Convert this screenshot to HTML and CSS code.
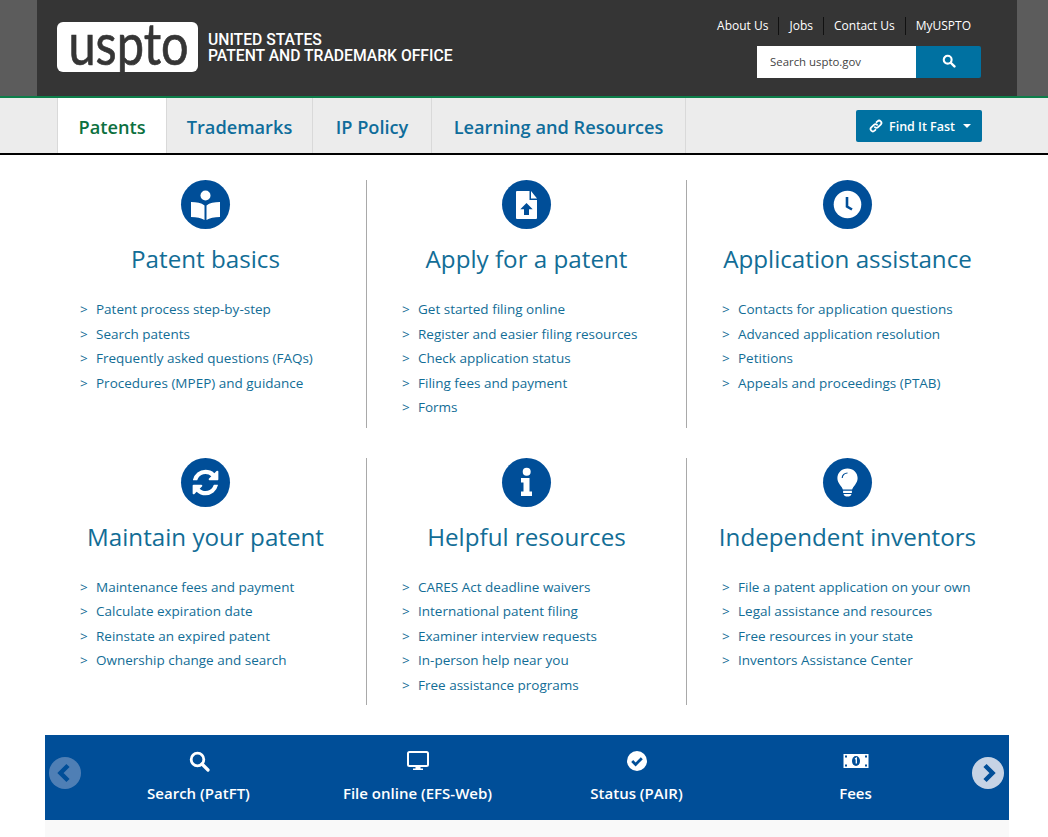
FILE: index.html
```html
<!DOCTYPE html>
<html lang="en">
<head>
<meta charset="utf-8">
<title>Patents | USPTO</title>
<link rel="stylesheet" href="styles.css">
</head>
<body>
<header class="masthead">
  <div class="masthead-inner">
    <a class="brand" href="#">
      <span class="logo"><span class="logo-text">uspto</span></span>
      <span class="agency">UNITED STATES<br>PATENT AND TRADEMARK OFFICE</span>
    </a>
    <div class="utility">
      <nav class="top-links">
        <a href="#">About Us</a><a href="#">Jobs</a><a href="#">Contact Us</a><a href="#">MyUSPTO</a>
      </nav>
      <form class="search">
        <span class="search-field">Search uspto.gov</span>
        <span class="search-btn">
          <svg class="i16" viewBox="0 0 16 16"><circle cx="6.5" cy="6.5" r="4.5" fill="none" stroke="#fff" stroke-width="2.4"/><path d="M10 10l4.2 4.2" stroke="#fff" stroke-width="2.8" stroke-linecap="round"/></svg>
        </span>
      </form>
    </div>
  </div>
</header>
<div class="navbar">
  <nav class="tabs">
    <a class="tab active" href="#">Patents</a>
    <a class="tab" href="#">Trademarks</a>
    <a class="tab" href="#">IP Policy</a>
    <a class="tab" href="#">Learning and Resources</a>
  </nav>
  <a class="fast" href="#">
    <svg class="i14" viewBox="0 0 16 16"><g fill="none" stroke="#fff" stroke-width="2" stroke-linecap="round"><path d="M6.7 9.3a2.6 2.6 0 0 0 3.7 0l3-3a2.6 2.6 0 0 0-3.7-3.7L8.6 3.7"/><path d="M9.3 6.7a2.6 2.6 0 0 0-3.7 0l-3 3a2.6 2.6 0 0 0 3.7 3.7l1.1-1.1"/></g></svg>
    <span>Find It Fast</span>
    <span class="caret"></span>
  </a>
</div>
<main class="grid">
  <section class="card">
    <span class="badge"><svg viewBox="0 0 49 49"><circle cx="24.500" cy="15.500" r="5" fill="#fff"/><path fill="#fff" d="M10 22c5.500 0 10.500.8 13.500 3.500V40c-3-2-8-3-13.500-3zM39 22c-5.500 0-10.500.8-13.500 3.500V40c3-2 8-3 13.500-3z"/></svg></span>
    <h2>Patent basics</h2>
    <ul>
      <li><span class="gt">&gt;</span><a href="#">Patent process step-by-step</a></li>
      <li><span class="gt">&gt;</span><a href="#">Search patents</a></li>
      <li><span class="gt">&gt;</span><a href="#">Frequently asked questions (FAQs)</a></li>
      <li><span class="gt">&gt;</span><a href="#">Procedures (MPEP) and guidance</a></li>
    </ul>
  </section>
  <section class="card">
    <span class="badge"><svg viewBox="0 0 49 49"><path fill="#fff" d="M15 11h12.500v9H35v18a1 1 0 0 1-1 1H15a1 1 0 0 1-1-1V12a1 1 0 0 1 1-1z"/><path fill="#fff" d="M29 11l6 7.500h-6z"/><path fill="#004e98" d="M24.500 23l6.200 6.200h-3.700V35h-5v-5.800h-3.700z"/></svg></span>
    <h2>Apply for a patent</h2>
    <ul>
      <li><span class="gt">&gt;</span><a href="#">Get started filing online</a></li>
      <li><span class="gt">&gt;</span><a href="#">Register and easier filing resources</a></li>
      <li><span class="gt">&gt;</span><a href="#">Check application status</a></li>
      <li><span class="gt">&gt;</span><a href="#">Filing fees and payment</a></li>
      <li><span class="gt">&gt;</span><a href="#">Forms</a></li>
    </ul>
  </section>
  <section class="card">
    <span class="badge"><svg viewBox="0 0 49 49"><circle cx="24.500" cy="24.500" r="13.800" fill="#fff"/><path d="M24 17v9.500l5 3" fill="none" stroke="#004e98" stroke-width="2.600"/></svg></span>
    <h2>Application assistance</h2>
    <ul>
      <li><span class="gt">&gt;</span><a href="#">Contacts for application questions</a></li>
      <li><span class="gt">&gt;</span><a href="#">Advanced application resolution</a></li>
      <li><span class="gt">&gt;</span><a href="#">Petitions</a></li>
      <li><span class="gt">&gt;</span><a href="#">Appeals and proceedings (PTAB)</a></li>
    </ul>
  </section>
  <section class="card">
    <span class="badge"><svg viewBox="0 0 49 49"><g transform="translate(9.500 9.500) scale(.01674)"><path fill="#fff" d="M1639 1056q0 5-1 7-64 268-268 434.500t-478 166.500q-146 0-282.500-55t-243.500-157l-129 129q-19 19-45 19t-45-19-19-45v-448q0-26 19-45t45-19h448q26 0 45 19t19 45-19 45l-137 137q71 66 161 102t187 36q134 0 250-65t186-179q11-17 53-117 8-23 30-23h192q13 0 22.500 9.500t9.500 22.500zm25-800v448q0 26-19 45t-45 19h-448q-26 0-45-19t-19-45 19-45l138-138q-148-137-349-137-134 0-250 65t-186 179q-11 17-53 117-8 23-30 23h-199q-13 0-22.500-9.500t-9.500-22.500v-7q65-268 270-434.500t480-166.500q146 0 284 55.500t245 156.500l130-129q19-19 45-19t45 19 19 45z"/></g></svg></span>
    <h2>Maintain your patent</h2>
    <ul>
      <li><span class="gt">&gt;</span><a href="#">Maintenance fees and payment</a></li>
      <li><span class="gt">&gt;</span><a href="#">Calculate expiration date</a></li>
      <li><span class="gt">&gt;</span><a href="#">Reinstate an expired patent</a></li>
      <li><span class="gt">&gt;</span><a href="#">Ownership change and search</a></li>
    </ul>
  </section>
  <section class="card">
    <span class="badge"><svg viewBox="0 0 49 49"><circle cx="24.700" cy="13.700" r="4" fill="#fff"/><path fill="#fff" d="M19 20h8.500v13.500H30V38H19v-4.500h2.500V24.500H19z"/></svg></span>
    <h2>Helpful resources</h2>
    <ul>
      <li><span class="gt">&gt;</span><a href="#">CARES Act deadline waivers</a></li>
      <li><span class="gt">&gt;</span><a href="#">International patent filing</a></li>
      <li><span class="gt">&gt;</span><a href="#">Examiner interview requests</a></li>
      <li><span class="gt">&gt;</span><a href="#">In-person help near you</a></li>
      <li><span class="gt">&gt;</span><a href="#">Free assistance programs</a></li>
    </ul>
  </section>
  <section class="card">
    <span class="badge"><svg viewBox="0 0 49 49"><g transform="translate(24.500 24.500) scale(.88) translate(-24.500 -24.500)"><path fill="#fff" d="M24.500 8.500c-6.500 0-11.500 4.800-11.500 11 0 3.300 1.300 5.600 3 7.700 1.500 1.900 2.800 3.500 3.200 5.300h10.600c.4-1.800 1.700-3.400 3.200-5.300 1.700-2.100 3-4.400 3-7.700 0-6.200-5-11-11.500-11z"/><path fill="#fff" d="M19.500 34h10v2.500h-10zM20 37.500h9c-.5 2-2.300 3-4.500 3s-4-1-4.500-3z"/><path d="M18.500 19.500c0-3.300 2.700-5.800 6-5.800" fill="none" stroke="#004e98" stroke-width="1.300"/></g></svg></span>
    <h2>Independent inventors</h2>
    <ul>
      <li><span class="gt">&gt;</span><a href="#">File a patent application on your own</a></li>
      <li><span class="gt">&gt;</span><a href="#">Legal assistance and resources</a></li>
      <li><span class="gt">&gt;</span><a href="#">Free resources in your state</a></li>
      <li><span class="gt">&gt;</span><a href="#">Inventors Assistance Center</a></li>
    </ul>
  </section>
</main>
<section class="tools">
  <div class="tool-bar">
    <span class="arrow prev"><svg viewBox="0 0 32 32"><path d="M19 8.500L11.500 16l7.500 7.500" fill="none" stroke="#004e98" stroke-width="4.500"/></svg></span>
    <a class="tool" href="#">
      <svg class="tool-icon" viewBox="0 0 22 22"><circle cx="9.500" cy="9.500" r="6.300" fill="none" stroke="#fff" stroke-width="2.800"/><path d="M14 14l6 6" stroke="#fff" stroke-width="3.200" stroke-linecap="round"/></svg>
      <span>Search (PatFT)</span>
    </a>
    <a class="tool" href="#">
      <svg class="tool-icon" viewBox="0 0 22 22"><rect x="1" y="2" width="20" height="14" rx="1.500" fill="none" stroke="#fff" stroke-width="2"/><path fill="#fff" d="M8.500 16h5v2.500H16V20H6v-1.500h2.500z"/></svg>
      <span>File online (EFS-Web)</span>
    </a>
    <a class="tool" href="#">
      <svg class="tool-icon" viewBox="0 0 22 22"><circle cx="11" cy="11" r="10" fill="#fff"/><path d="M6.200 11l3.400 3.400 6.200-6.200" fill="none" stroke="#004e98" stroke-width="2.800"/></svg>
      <span>Status (PAIR)</span>
    </a>
    <a class="tool" href="#">
      <svg class="tool-icon wide" viewBox="0 0 26 22"><rect x="0.500" y="4" width="25" height="14" fill="#fff"/><ellipse cx="13" cy="11" rx="4" ry="5" fill="#004e98"/><path d="M12 9l1.300-.8V13.500" fill="none" stroke="#fff" stroke-width="1.300"/><path fill="#004e98" d="M2 5.500h2v2H2zM22 5.500h2v2h-2zM2 14.500h2v2H2zM22 14.500h2v2h-2z"/></svg>
      <span>Fees</span>
    </a>
    <span class="arrow next"><svg viewBox="0 0 32 32"><path d="M13 8.500l7.500 7.500-7.500 7.500" fill="none" stroke="#004e98" stroke-width="4.500"/></svg></span>
  </div>
  <div class="tool-foot"></div>
</section>
</body>
</html>
```
FILE: styles.css
```css
* { box-sizing: border-box; }
html, body { margin: 0; padding: 0; }
body { background: #fff; font-family: "Open Sans", "Noto Sans", sans-serif; color: #126d96; }
a { color: inherit; text-decoration: none; }

.masthead { background: #5c5c5c; height: 96px; }
.masthead-inner {
  width: 980px; height: 96px; margin-left: 37px; background: #353535;
  display: flex; justify-content: space-between; padding: 0 36px 0 20px;
}
.brand { display: flex; align-items: flex-start; gap: 10px; padding-top: 22px; }
.logo {
  width: 141px; height: 50px; background: #fff; border-radius: 6px; color: #353535;
  font-family: "Lato", sans-serif; font-size: 58px; line-height: 42px; text-align: center;
}
.logo-text { display: inline-block; transform: scaleX(.84); -webkit-text-stroke: .7px #353535; }
.agency {
  font-family: "Roboto", sans-serif; font-weight: 500; font-size: 15.700px; line-height: 16px;
  color: #fff; padding-top: 10px; white-space: nowrap;
}
.utility { display: flex; flex-direction: column; align-items: flex-end; padding-top: 17px; }
.top-links { display: flex; font-size: 12px; line-height: 18px; color: #fff; }
.top-links a { padding: 0 10px; border-left: 1px solid #111; }
.top-links a:first-child { border-left: 0; }
.search { display: flex; margin-top: 11px; height: 32px; }
.search-field { width: 159px; background: #fff; color: #444; font-size: 11.400px; line-height: 32px; padding-left: 13px; }
.search-btn { width: 65px; background: #0071a1; border-radius: 0 2px 2px 0; display: flex; align-items: center; justify-content: center; padding-bottom: 2px; }
.i16 { width: 14px; height: 14px; }
.i14 { width: 14px; height: 14px; }

.navbar {
  height: 59px; background: #ececec; border-top: 2px solid #0d7f4a; border-bottom: 2px solid #000;
  display: flex; justify-content: space-between; padding: 0 66px 0 57px;
}
.tabs { display: grid; grid-template-columns: 110px 146px 119px 254px; }
.tab {
  font-size: 18.200px; font-weight: 600; line-height: 59px; height: 55px; text-align: center;
  border-right: 1px solid #d9d9d9; color: #0f6d9b; white-space: nowrap;
}
.tab.active { background: #fff; color: #0c7040; border-left: 1px solid #d9d9d9; }
.fast {
  align-self: flex-start; margin-top: 12px; width: 126px; height: 32px; background: #0071a1; border-radius: 2px;
  color: #fff; font-size: 12.500px; font-weight: 600; display: flex; align-items: center; gap: 6px; padding-left: 13px;
}
.caret { width: 0; height: 0; border: 4px solid transparent; border-top-color: #fff; border-bottom: 0; margin-left: 2px; }

.grid {
  display: grid; grid-template-columns: 321px 320px 322px; grid-template-rows: 247.500px 247.500px; row-gap: 30px;
  width: 964px; margin: 25px 0 30px 45px;
}
.card { border-left: 1px solid #a9a9a9; display: flex; flex-direction: column; align-items: center; }
.card:nth-child(3n+1) { border-left: 0; }
.badge { width: 49px; height: 49px; }
.badge svg { display: block; width: 49px; height: 49px; border-radius: 50%; background: #004e98; }
h2 { margin: 13px 0 0; font-size: 24.200px; font-weight: 400; line-height: 34px; color: #126d96; white-space: nowrap; }
ul { list-style: none; margin: 21px 0 0; padding: 0 0 0 35px; align-self: stretch; font-size: 13.500px; line-height: 24.500px; }
li { display: flex; white-space: nowrap; }
.gt { width: 16px; flex: none; }

.tools { width: 964px; margin-left: 45px; }
.tool-bar {
  position: relative; height: 85px; background: #004e98; color: #fff; padding: 0 44px;
  display: grid; grid-template-columns: repeat(4, 219px);
}
.tool { display: flex; flex-direction: column; align-items: center; padding-top: 15px; font-size: 15px; font-weight: 600; line-height: 20px; }
.tool-icon { width: 22px; height: 22px; margin-bottom: 11px; }
.tool-icon.wide { width: 26px; }
.arrow { position: absolute; top: 22px; width: 32px; height: 32px; border-radius: 50%; }
.arrow svg { display: block; }
.prev { left: 4px; background: #4f7fb5; }
.next { right: 5px; background: #c6d3e5; }
.tool-foot { height: 17px; background: #f9f9f9; }
```
